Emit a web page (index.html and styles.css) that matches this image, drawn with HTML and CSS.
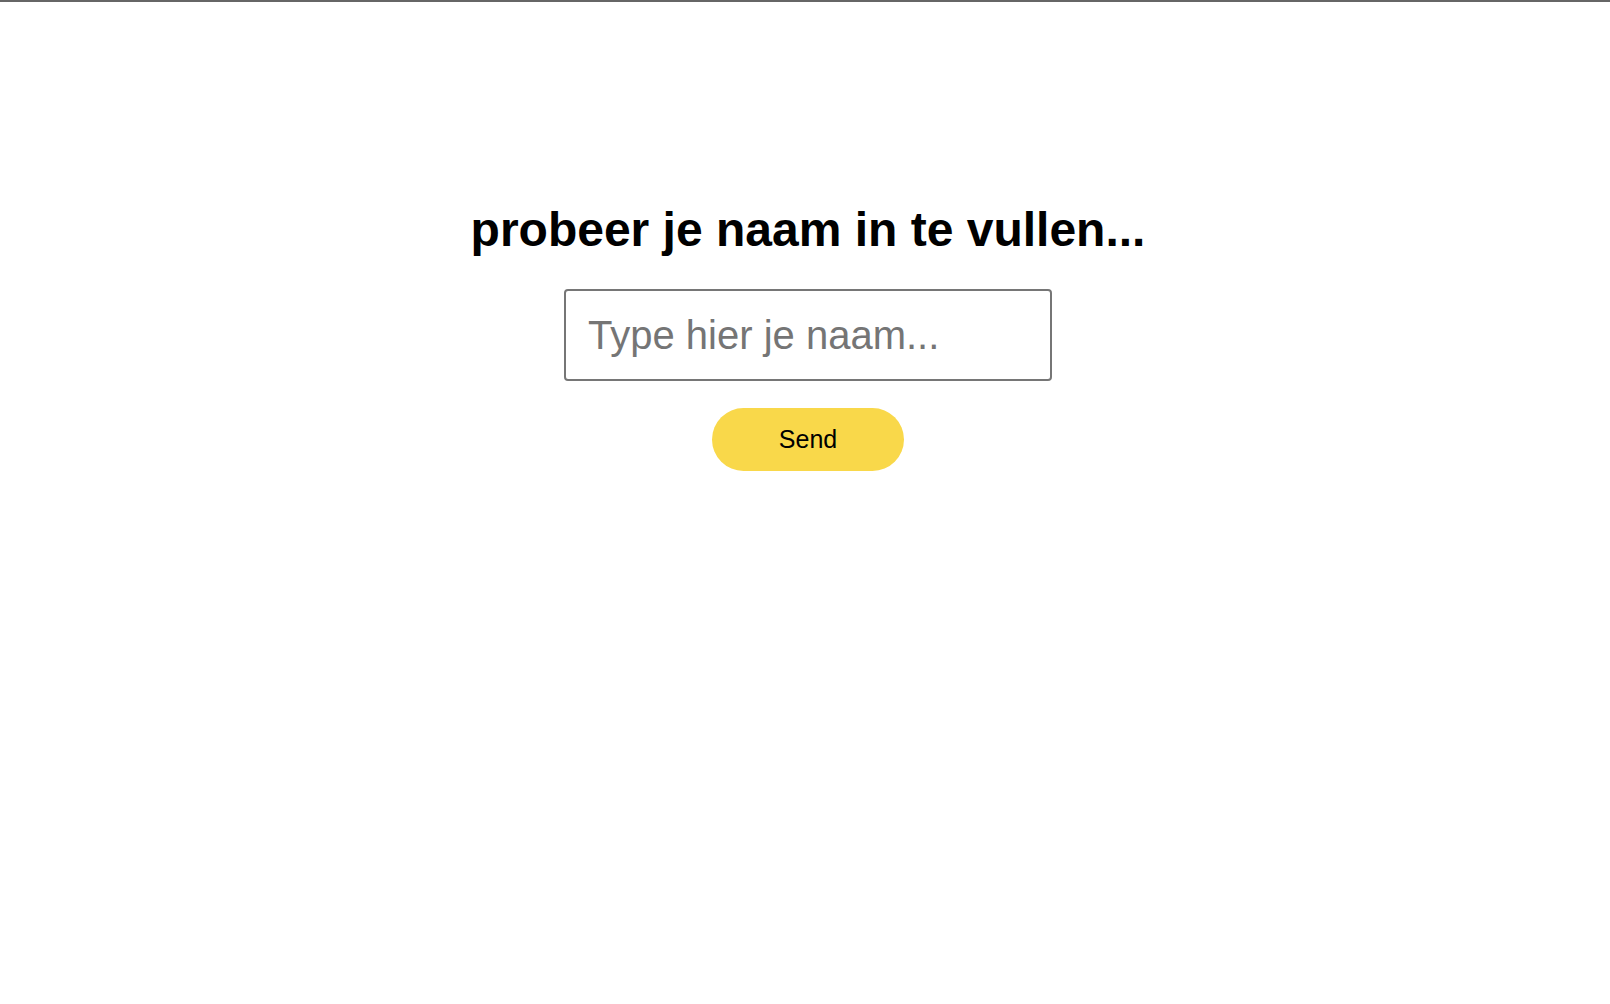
FILE: index.html
```html
<!DOCTYPE html>
<html lang="nl">
<head>
<meta charset="utf-8">
<title>Naam</title>
<link rel="stylesheet" href="styles.css">
</head>
<body>
<div class="topline"></div>
<main class="page">
  <h1 class="title">probeer je naam in te vullen...</h1>
  <input class="name-input" type="text" placeholder="Type hier je naam...">
  <button class="send-btn" type="button">Send</button>
</main>
</body>
</html>
```
FILE: styles.css
```css
html, body {
  margin: 0;
  padding: 0;
  background: #ffffff;
}
body {
  font-family: "Liberation Sans", Arial, Helvetica, sans-serif;
  color: #000;
}
.topline {
  height: 2px;
  background: #666666;
}
.page {
  display: flex;
  flex-direction: column;
  align-items: center;
  padding-top: 200px;
  padding-left: 6px;
}
.title {
  margin: 0;
  font-size: 48px;
  line-height: 56px;
  font-weight: bold;
  color: #000;
}
.name-input {
  margin-top: 31px;
  box-sizing: border-box;
  width: 488px;
  height: 92px;
  border: 2px solid #767676;
  border-radius: 4px;
  padding: 0 22px;
  font-family: "Liberation Sans", Arial, Helvetica, sans-serif;
  font-size: 40px;
  color: #000;
  background: #fff;
  outline: none;
}
.name-input::placeholder {
  color: #757575;
}
.send-btn {
  margin-top: 27px;
  width: 192px;
  height: 63px;
  border: none;
  border-radius: 32px;
  background: #f9d84a;
  font-family: "Liberation Sans", Arial, Helvetica, sans-serif;
  font-size: 25px;
  color: #000;
  padding: 0;
  cursor: pointer;
}
```
